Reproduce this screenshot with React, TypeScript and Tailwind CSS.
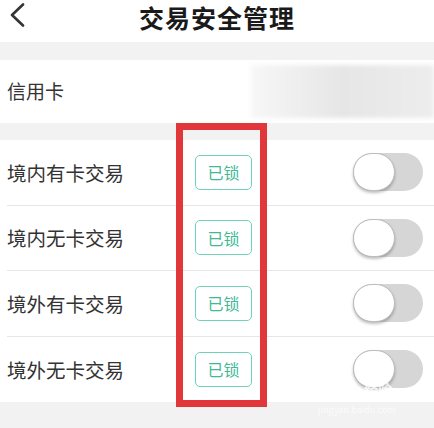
const rows = ["境内有卡交易", "境内无卡交易", "境外有卡交易", "境外无卡交易"]

const font = { fontFamily: '"Noto Sans CJK SC", "Noto Sans", sans-serif' }

const Toggle = () => (
  <div className="relative h-[38px] w-[70px] rounded-full bg-[#d6d6d6]">
    <div className="absolute left-0 top-0 h-[38px] w-[42px] rounded-full border border-[#bdbdbd] bg-white shadow-[0_2px_3px_rgba(0,0,0,0.25)]" />
  </div>
)

export default function App() {
  return (
    <div className="relative h-[428px] w-[434px] overflow-hidden bg-[#f2f2f2]" style={font}>
      {/* header */}
      <div className="relative flex h-[42px] items-center justify-center bg-white">
        <svg className="absolute left-[8px] top-[3px]" width="18" height="24" viewBox="0 0 18 24" fill="none">
          <path d="M15 1.5L4 12l11 10.5" stroke="#333" strokeWidth="2.6" strokeLinecap="round" strokeLinejoin="round" />
        </svg>
        <span className="-mt-[8px] text-[25px] font-bold leading-none tracking-[1px] text-[#1a1a1a]">交易安全管理</span>
      </div>

      <div className="h-[18px]" />

      {/* card row */}
      <div className="flex h-[63px] items-center bg-white pl-[7px]">
        <span className="text-[19px] text-[#333]">信用卡</span>
        <div className="ml-auto h-[53px] w-[183px] bg-gradient-to-r from-[#f7f7f7] via-[#e6e6e6] to-[#ededed] blur-[2px]" />
      </div>

      <div className="h-[17px]" />

      {/* lock rows */}
      <div className="bg-white">
        {rows.map((label, i) => (
          <div key={label} className="pl-[7px]">
            <div className={`flex h-[65.5px] items-center ${i < rows.length - 1 ? "border-b border-[#e6e6e6]" : ""}`}>
              <span className="w-[188px] text-[19.5px] text-[#333]">{label}</span>
              <div className="flex h-[35px] w-[57px] items-center justify-center rounded-[5px] border border-[#6fd2bb] text-[16px] text-[#3fb996]">
                已锁
              </div>
              <div className="ml-auto mr-[11px]">
                <Toggle />
              </div>
            </div>
          </div>
        ))}
      </div>

      {/* highlight box */}
      <div className="absolute left-[176px] top-[123px] h-[284px] w-[91px] border-[7px] border-[#e2373a]" />

      {/* watermark */}
      <div className="absolute left-[318px] top-[381px] text-[14px] font-bold leading-[16px] text-white/80">Bai du 经验</div>
      <div className="absolute left-[318px] top-[405px] text-[9px] leading-[10px] text-white/70">jingyan.baidu.com</div>
    </div>
  )
}
